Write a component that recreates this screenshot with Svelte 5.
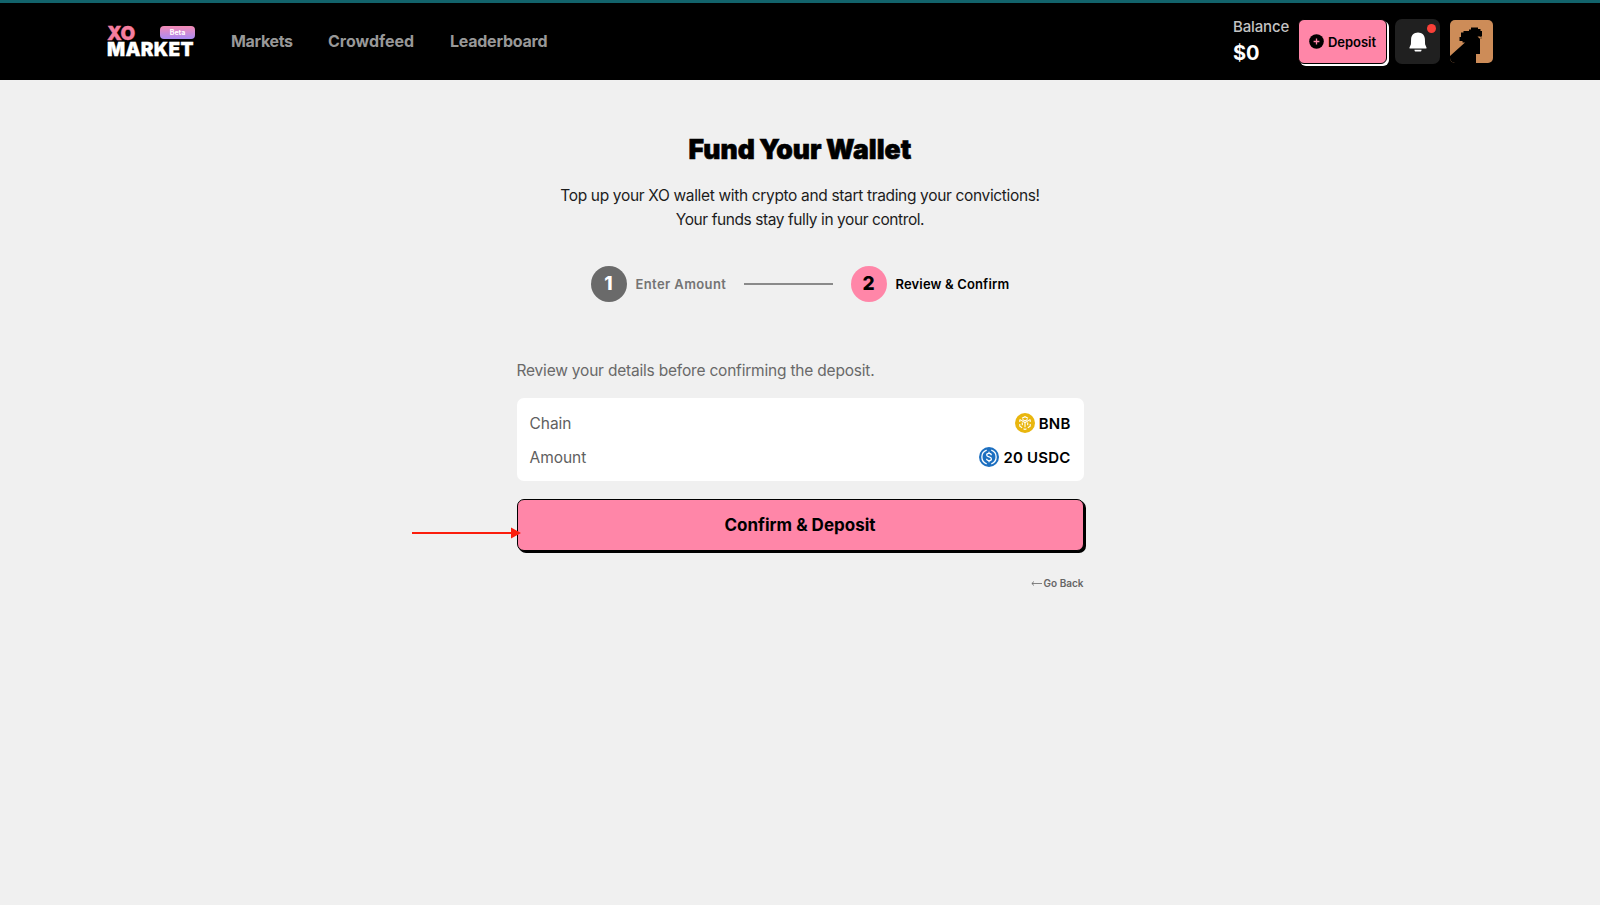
<script>
  const links = [
    { label: "Markets", width: 62 },
    { label: "Crowdfeed", width: 87 },
    { label: "Leaderboard", width: 98 },
  ];
</script>

<header class="topbar">
  <div class="logo">
    <div class="logo-top">
      <span class="xo">XO</span>
      <span class="beta">Beta</span>
    </div>
    <span class="market">MARKET</span>
  </div>

  <nav>
    {#each links as link}
      <a href="#top" style="width: {link.width}px">{link.label}</a>
    {/each}
  </nav>

  <div class="balance">
    <span class="balance-label">Balance</span>
    <strong>$0</strong>
  </div>

  <button class="deposit">
    <svg width="15" height="15" viewBox="0 0 15 15">
      <circle cx="7.5" cy="7.5" r="7.3" />
      <path d="M7.5 4.6v5.8M4.6 7.5h5.8" stroke="#ff86a8" stroke-width="1.3" />
    </svg>
    <span>Deposit</span>
  </button>

  <button class="bell" aria-label="Notifications">
    <svg width="20" height="20" viewBox="0 0 20 20" fill="#fff">
      <path d="M10 .5C6 .5 3.2 3.3 3.1 7L2.9 12.3 1.5 15.4c-.2.6 0 1.1.7 1.1h15.6c.7 0 .9-.5.7-1.1l-1.4-3.1L16.9 7C16.8 3.3 14 .5 10 .5z" />
      <path d="M6.5 17.8h7v.4c0 .8-.6 1.300-1.300 1.300H7.800c-.7 0-1.300-.5-1.300-1.300z" />
    </svg>
    <span class="dot"></span>
  </button>

  <svg class="avatar" width="43" height="43" viewBox="0 0 43 43">
    <rect width="43" height="43" rx="5" fill="#cd8c58" />
    <path d="M0 36 15 22.500H12.500V21H9.500V17H11V12.500h2.500V11H19V9.500h2V7.500h7V9h2.500v2h1.500v5.500h-1.500l1.500 2h-2V34H26v9H5a5 5 0 0 1-5-5z" />
    <path d="M27.500 16.500h2.500l2 2h-2.500z" fill="#cd8c58" />
  </svg>
</header>

<main>
  <h1>Fund Your Wallet</h1>
  <p class="intro">
    <span class="line-one">Top up your XO wallet with crypto and start trading your convictions!</span>
    <span class="line-two">Your funds stay fully in your control.</span>
  </p>

  <div class="steps">
    <span class="num">1</span>
    <span class="step-label">Enter Amount</span>
    <span class="rule"></span>
    <span class="num active">2</span>
    <span class="step-label active">Review &amp; Confirm</span>
  </div>

  <section>
    <p class="hint">Review your details before confirming the deposit.</p>

    <div class="details">
      <div class="row">
        <span class="key">Chain</span>
        <span class="value">
          <svg width="20" height="20" viewBox="0 0 20 20">
            <circle cx="10" cy="10" r="10" fill="#e9b60e" />
            <g fill="none" stroke="#fff" stroke-width="1.1">
              <path d="M7 5.300 10 3.700l3 1.600M4.800 9V6.600M15.200 9V6.600M4.800 11v2.300l2.400 1.400M15.200 11v2.300l-2.400 1.400M8.500 15.700l1.500.8 1.500-.8" />
              <path d="M5 6.600 10 9.600l5-3M7.500 6.500 10 7.900l2.500-1.400M10 9.600v4.600M7.300 9.600v2.600M12.700 9.600v2.600" />
            </g>
          </svg>
          <b>BNB</b>
        </span>
      </div>
      <div class="row">
        <span class="key">Amount</span>
        <span class="value">
          <svg width="20" height="20" viewBox="0 0 20 20">
            <circle cx="10" cy="10" r="10" fill="#1c6fc0" />
            <g fill="none" stroke="#fff" stroke-width="1.3">
              <path d="M7.700 3.200a7.200 7.200 0 0 0 0 13.600M12.300 3.200a7.200 7.200 0 0 1 0 13.600" />
              <path d="M12.300 8.200c-.1-1.200-1-1.800-2.300-1.800-1.400 0-2.300.6-2.300 1.700 0 2.500 4.700 1.200 4.700 3.800 0 1.100-1 1.800-2.400 1.800s-2.300-.7-2.400-1.900M10 4.800v1.600M10 13.700v1.600" />
            </g>
          </svg>
          <b class="amount">20 USDC</b>
        </span>
      </div>
    </div>

    <div class="confirm-wrap">
      <button class="confirm">Confirm &amp; Deposit</button>
      <svg class="pointer" width="110" height="12" viewBox="0 0 110 12" fill="#fb1d0c">
        <path d="M0 5h100v2H0zM99 .5 109 6 99 11.500z" />
      </svg>
    </div>

    <a class="back" href="#top">
      <svg width="11" height="7" viewBox="0 0 11 7" fill="none" stroke="#666" stroke-width=".8">
        <path d="M11 3.500H1M3 1.500 .8 3.500 3 5.500" />
      </svg>
      <span>Go Back</span>
    </a>
  </section>
</main>

<style>
  :global(body) {
    background: #f0f0f0;
    font-family: Inter, "Liberation Sans", sans-serif;
    color: #000;
  }

  button {
    font-family: inherit;
    padding: 0;
    color: #000;
  }

  a {
    text-decoration: none;
  }

  .topbar {
    display: flex;
    align-items: flex-start;
    box-sizing: border-box;
    height: 80px;
    padding: 0 107px;
    background: #000;
    border-top: 3px solid #12636b;
  }

  .logo {
    width: 88px;
    margin-top: 23px;
  }

  .logo-top {
    display: flex;
    justify-content: space-between;
    height: 16px;
  }

  .xo,
  .market {
    display: block;
    font-size: 19px;
    line-height: 16px;
    font-weight: 900;
    letter-spacing: 0.3px;
    -webkit-text-stroke: 0.3px;
  }

  .xo {
    color: #f57e9f;
    letter-spacing: -0.2px;
  }

  .market {
    color: #fff;
  }

  .beta {
    width: 35px;
    height: 13px;
    border-radius: 4px;
    background: linear-gradient(#f58bb4, #a98bf5);
    color: #fff;
    font-size: 7px;
    line-height: 14px;
    font-weight: 700;
    text-align: center;
  }

  nav {
    display: flex;
    gap: 35px;
    flex: 1;
    margin: 26px 0 0 36px;
  }

  nav a {
    color: #989898;
    font-size: 16px;
    line-height: 24px;
    font-weight: 700;
    letter-spacing: -0.25px;
    white-space: nowrap;
  }

  nav a:first-child {
    letter-spacing: -0.35px;
  }

  nav a:nth-child(2) {
    letter-spacing: 0;
  }

  .balance {
    width: 65px;
    margin-top: 12px;
    color: #fff;
  }

  .balance-label {
    display: block;
    color: #c4c4c4;
    font-size: 15px;
    line-height: 24px;
    font-weight: 500;
    letter-spacing: -0.15px;
  }

  .balance strong {
    display: block;
    font-size: 20px;
    line-height: 28px;
  }

  .deposit {
    display: flex;
    align-items: center;
    justify-content: center;
    gap: 4px;
    width: 89px;
    height: 45px;
    margin-top: 16px;
    background: #ff86a8;
    border: 1px solid #000;
    border-radius: 6px;
    box-shadow: 2px 2px 0 #fff;
    font-size: 13px;
    font-weight: 600;
  }

  .bell {
    display: grid;
    place-items: center;
    position: relative;
    width: 45px;
    height: 45px;
    margin: 16px 10px 0 8px;
    background: #202020;
    border: 0;
    border-radius: 7px;
  }

  .dot {
    position: absolute;
    top: 5px;
    right: 4px;
    width: 9px;
    height: 9px;
    border-radius: 50%;
    background: #fa4038;
  }

  .avatar {
    margin-top: 17px;
  }

  main {
    display: flex;
    flex-direction: column;
    align-items: center;
    padding-top: 49px;
  }

  h1 {
    margin: 0;
    font-size: 26.5px;
    line-height: 40px;
    font-weight: 900;
    letter-spacing: 0.05px;
    word-spacing: -1px;
    -webkit-text-stroke: 0.6px #000;
  }

  .intro {
    margin: 15px 0 0;
    color: #1c1c1c;
    font-size: 15.5px;
    line-height: 23.5px;
    text-align: center;
  }

  .intro span {
    display: block;
  }

  .line-one {
    letter-spacing: -0.34px;
  }

  .line-two {
    letter-spacing: -0.42px;
  }

  .steps {
    display: flex;
    align-items: center;
    width: 419px;
    height: 36px;
    margin-top: 35px;
  }

  .num {
    width: 36px;
    height: 36px;
    border-radius: 50%;
    background: #6a6a6a;
    color: #fff;
    font-size: 19px;
    line-height: 36px;
    font-weight: 800;
    text-align: center;
  }

  .num.active {
    background: #ff86a8;
    color: #000;
  }

  .step-label {
    width: 91px;
    margin-left: 9px;
    color: #747474;
    font-size: 13px;
    font-weight: 600;
    letter-spacing: 0.4px;
    white-space: nowrap;
  }

  .step-label.active {
    color: #000;
    letter-spacing: 0.15px;
  }

  .rule {
    width: 89px;
    height: 1.5px;
    margin: 0 18px 0 17px;
    background: #8a8a8a;
  }

  section {
    width: 567px;
    margin-top: 56px;
  }

  .hint {
    margin: 0;
    color: #696969;
    font-size: 15.5px;
    line-height: 25px;
    letter-spacing: -0.2px;
  }

  .details {
    display: flex;
    flex-direction: column;
    gap: 10px;
    box-sizing: border-box;
    height: 83px;
    margin-top: 15px;
    padding: 13px;
    background: #fff;
    border-radius: 7px;
  }

  .row {
    display: flex;
    justify-content: space-between;
    height: 24px;
    line-height: 25px;
  }

  .key {
    color: #606060;
    font-size: 15.5px;
    letter-spacing: -0.05px;
  }

  .value {
    display: flex;
    align-items: center;
    gap: 4px;
    font-size: 15px;
  }

  .value b {
    font-weight: 600;
    letter-spacing: 0.2px;
  }

  .confirm-wrap {
    position: relative;
    margin-top: 18px;
  }

  .confirm {
    display: block;
    width: 567px;
    height: 52px;
    background: #ff86a8;
    border: 1px solid #000;
    border-radius: 7px;
    box-shadow: 1px 1px 0 #000, 2px 2px 0 #000;
    font-size: 17px;
    font-weight: 700;
  }

  .pointer {
    position: absolute;
    top: 28px;
    left: -105px;
  }

  .back {
    display: flex;
    align-items: center;
    justify-content: flex-end;
    gap: 2px;
    margin-top: 24px;
    color: #666;
    font-size: 10px;
    line-height: 16px;
    font-weight: 600;
  }
</style>
